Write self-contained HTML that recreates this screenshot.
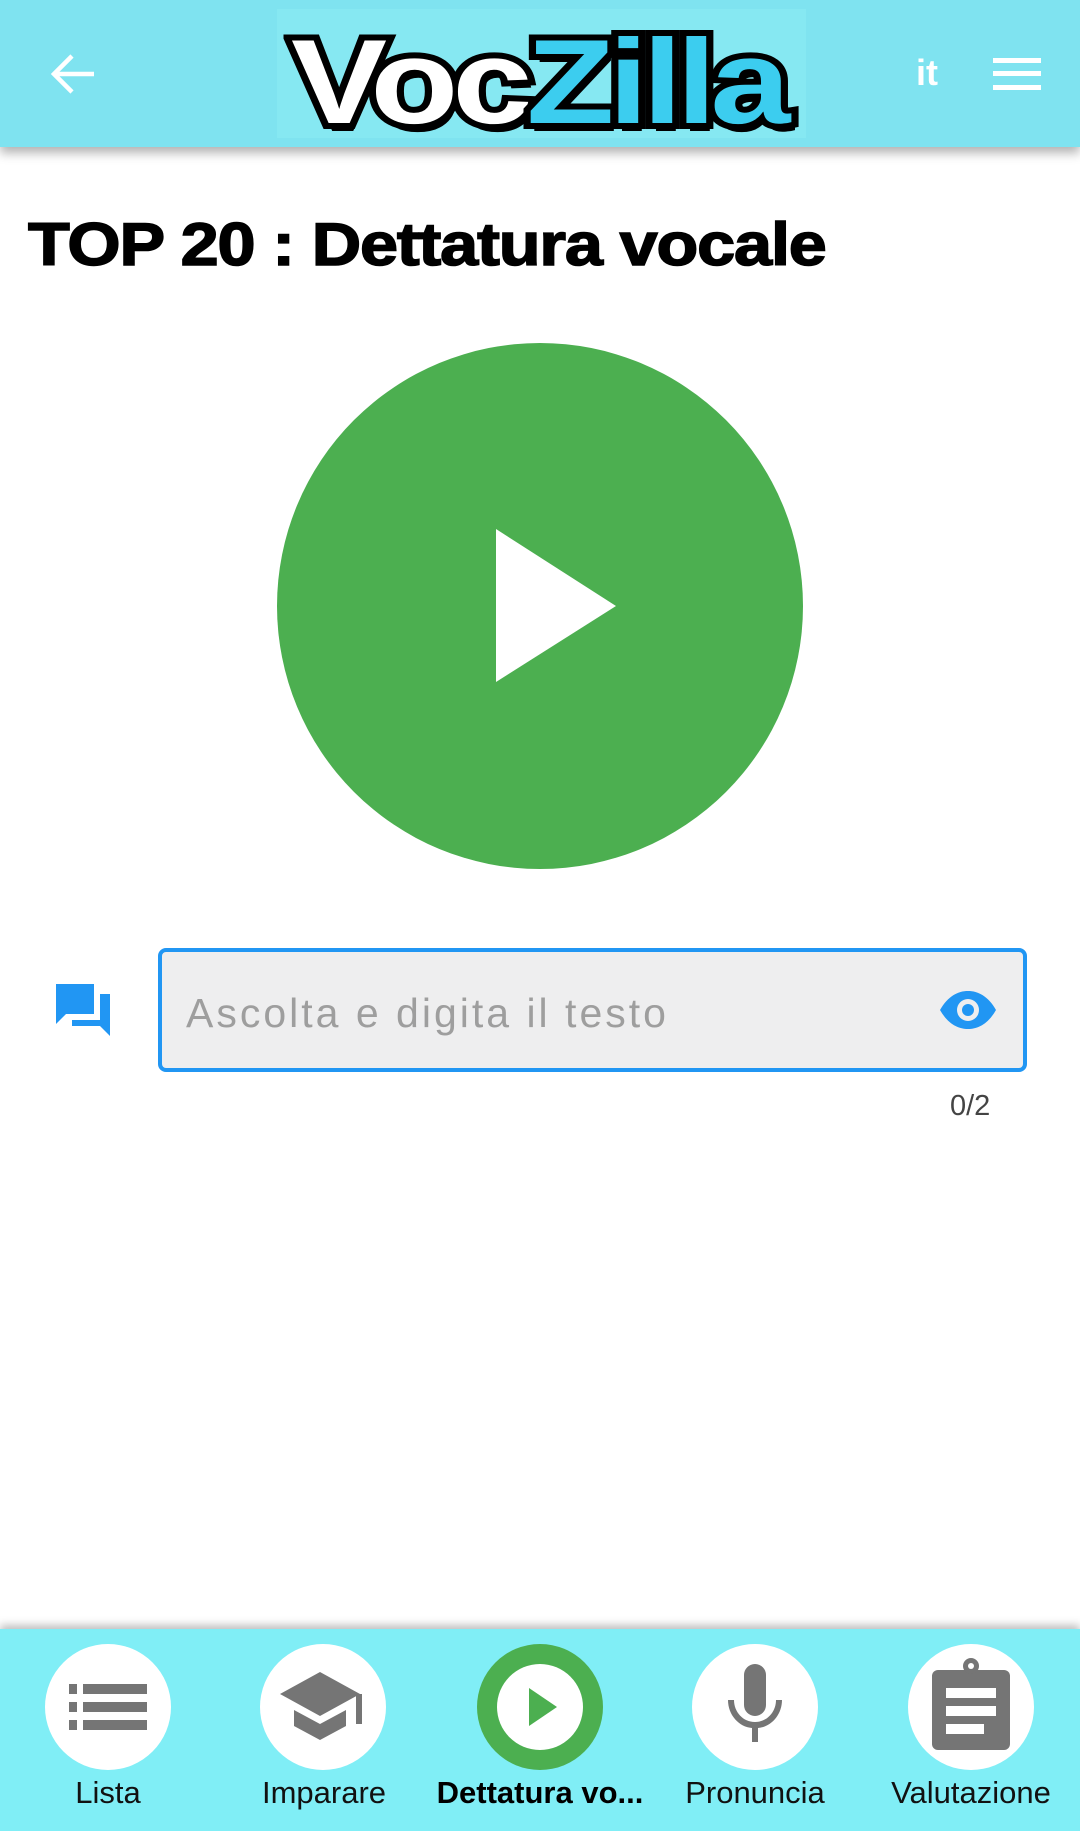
<!DOCTYPE html>
<html><head><meta charset="utf-8"><style>
*{margin:0;padding:0;box-sizing:border-box}
body{width:1080px;height:1831px;position:relative;background:#fff;font-family:"Liberation Sans",sans-serif;overflow:hidden}
.hdr{position:absolute;left:0;top:0;width:1080px;height:147px;background:#7fe3f0;box-shadow:0 6px 10px rgba(0,0,0,.3);z-index:2}
.logo{position:absolute;left:277px;top:9px;width:529px;height:129px;background:#86e8f2;overflow:hidden}
.logo .w{position:absolute;left:14px;top:4px;white-space:nowrap;font-weight:900;font-size:120px;letter-spacing:-5px;transform:scaleX(1.2);transform-origin:left;-webkit-text-stroke:12px #000;paint-order:stroke fill;text-shadow:3px 8px 0 #000}
.title{position:absolute;left:28px;top:210px;font-weight:900;font-size:60px;letter-spacing:-1px;color:#000;-webkit-text-stroke:1.5px #000;transform:scaleX(1.14);transform-origin:left;white-space:nowrap}
.circ{position:absolute;left:277px;top:343px;width:526px;height:526px;border-radius:50%;background:#4caf50}
.inp{position:absolute;left:158px;top:948px;width:869px;height:124px;border:4px solid #2196f3;border-radius:8px;background:#eeeeef}
.ph{position:absolute;left:24px;top:38px;font-size:41px;color:#9e9e9e;letter-spacing:3px}
.cnt{position:absolute;left:950px;top:1090px;font-size:29px;color:#444}
.nav{position:absolute;left:0;top:1629px;width:1080px;height:202px;background:#80eef6;box-shadow:0 -4px 8px rgba(0,0,0,.25)}
.b{position:absolute;top:15px;width:126px;height:126px;border-radius:50%;background:#fff}
.l{position:absolute;top:146px;width:216px;text-align:center;font-size:31px;color:#111}
</style></head><body>
<div class="hdr">
<svg style="position:absolute;left:50px;top:52px" width="46" height="44" viewBox="0 0 46 44"><path d="M44 22H6M22 4 4 22l18 18" stroke="#fff" stroke-width="4.5" fill="none"/></svg>
<div class="logo"><div class="w"><span style="color:#fff">Voc</span><span style="color:#3ccdef">Zilla</span></div></div>
<div style="position:absolute;left:916px;top:52px;color:#fff;font-size:36px;font-weight:bold">it</div>
<svg style="position:absolute;left:993px;top:58px" width="48" height="32"><rect y="0" width="48" height="5" fill="#fff"/><rect y="13" width="48" height="5" fill="#fff"/><rect y="27" width="48" height="5" fill="#fff"/></svg>
</div>
<div class="title">TOP 20 : Dettatura vocale</div>
<div class="circ"><svg width="526" height="526"><polygon points="219,186 219,339 339,263" fill="#fff"/></svg></div>
<svg style="position:absolute;left:56px;top:984px" width="56" height="52" viewBox="0 0 56 52"><path d="M0 0h38v30H10L0 40z" fill="#2196f3"/><path d="M44 10h10v42L44 42H16v-6h28z" fill="#2196f3"/></svg>
<div class="inp"><div class="ph">Ascolta e digita il testo</div>
<svg style="position:absolute;left:776px;top:38px" width="60" height="40" viewBox="0 0 60 40"><path d="M2 20C10 6 20 1 30 1s20 5 28 19C50 34 40 39 30 39S10 34 2 20z" fill="#2196f3"/><circle cx="30" cy="20" r="11" fill="#eeeeef"/><circle cx="30" cy="20" r="6" fill="#2196f3"/></svg>
</div>
<div class="cnt">0/2</div>
<div class="nav">
<div class="b" style="left:45px"><svg width="126" height="126"><g fill="#757575"><rect x="24" y="40" width="8" height="10"/><rect x="38" y="40" width="64" height="10"/><rect x="24" y="58" width="8" height="10"/><rect x="38" y="58" width="64" height="10"/><rect x="24" y="76" width="8" height="10"/><rect x="38" y="76" width="64" height="10"/></g></svg></div>
<div class="b" style="left:260px"><svg width="126" height="126"><g fill="#757575"><path d="M60 28 20 50l40 22 40-22z"/><path d="M34 66v16l26 14 26-14V66L60 80z"/><rect x="96" y="50" width="6" height="30"/></g></svg></div>
<div class="b" style="left:477px;background:#4caf50"><div style="position:absolute;left:20px;top:20px;width:86px;height:86px;border-radius:50%;background:#fff"></div><svg style="position:absolute;left:0;top:0" width="126" height="126"><polygon points="52,44 52,82 80,63" fill="#4caf50"/></svg></div>
<div class="b" style="left:692px"><svg width="126" height="126"><g fill="#757575"><rect x="52" y="20" width="22" height="52" rx="11"/><path d="M36 56h6c0 12 9 22 21 22s21-10 21-22h6c0 15-11 27-24 28v14h-6V84C47 83 36 71 36 56z"/></g></svg></div>
<div class="b" style="left:908px"><svg width="126" height="126"><g fill="#757575"><rect x="24" y="26" width="78" height="80" rx="6"/><circle cx="63" cy="22" r="8"/></g><circle cx="63" cy="22" r="3" fill="#fff"/><g fill="#fff"><rect x="38" y="44" width="50" height="10"/><rect x="38" y="62" width="50" height="10"/><rect x="38" y="80" width="38" height="10"/></g></svg></div>
<div class="l" style="left:0">Lista</div>
<div class="l" style="left:216px">Imparare</div>
<div class="l" style="left:432px;font-weight:bold;color:#000">Dettatura vo...</div>
<div class="l" style="left:647px">Pronuncia</div>
<div class="l" style="left:863px">Valutazione</div>
</div>
</body></html>
